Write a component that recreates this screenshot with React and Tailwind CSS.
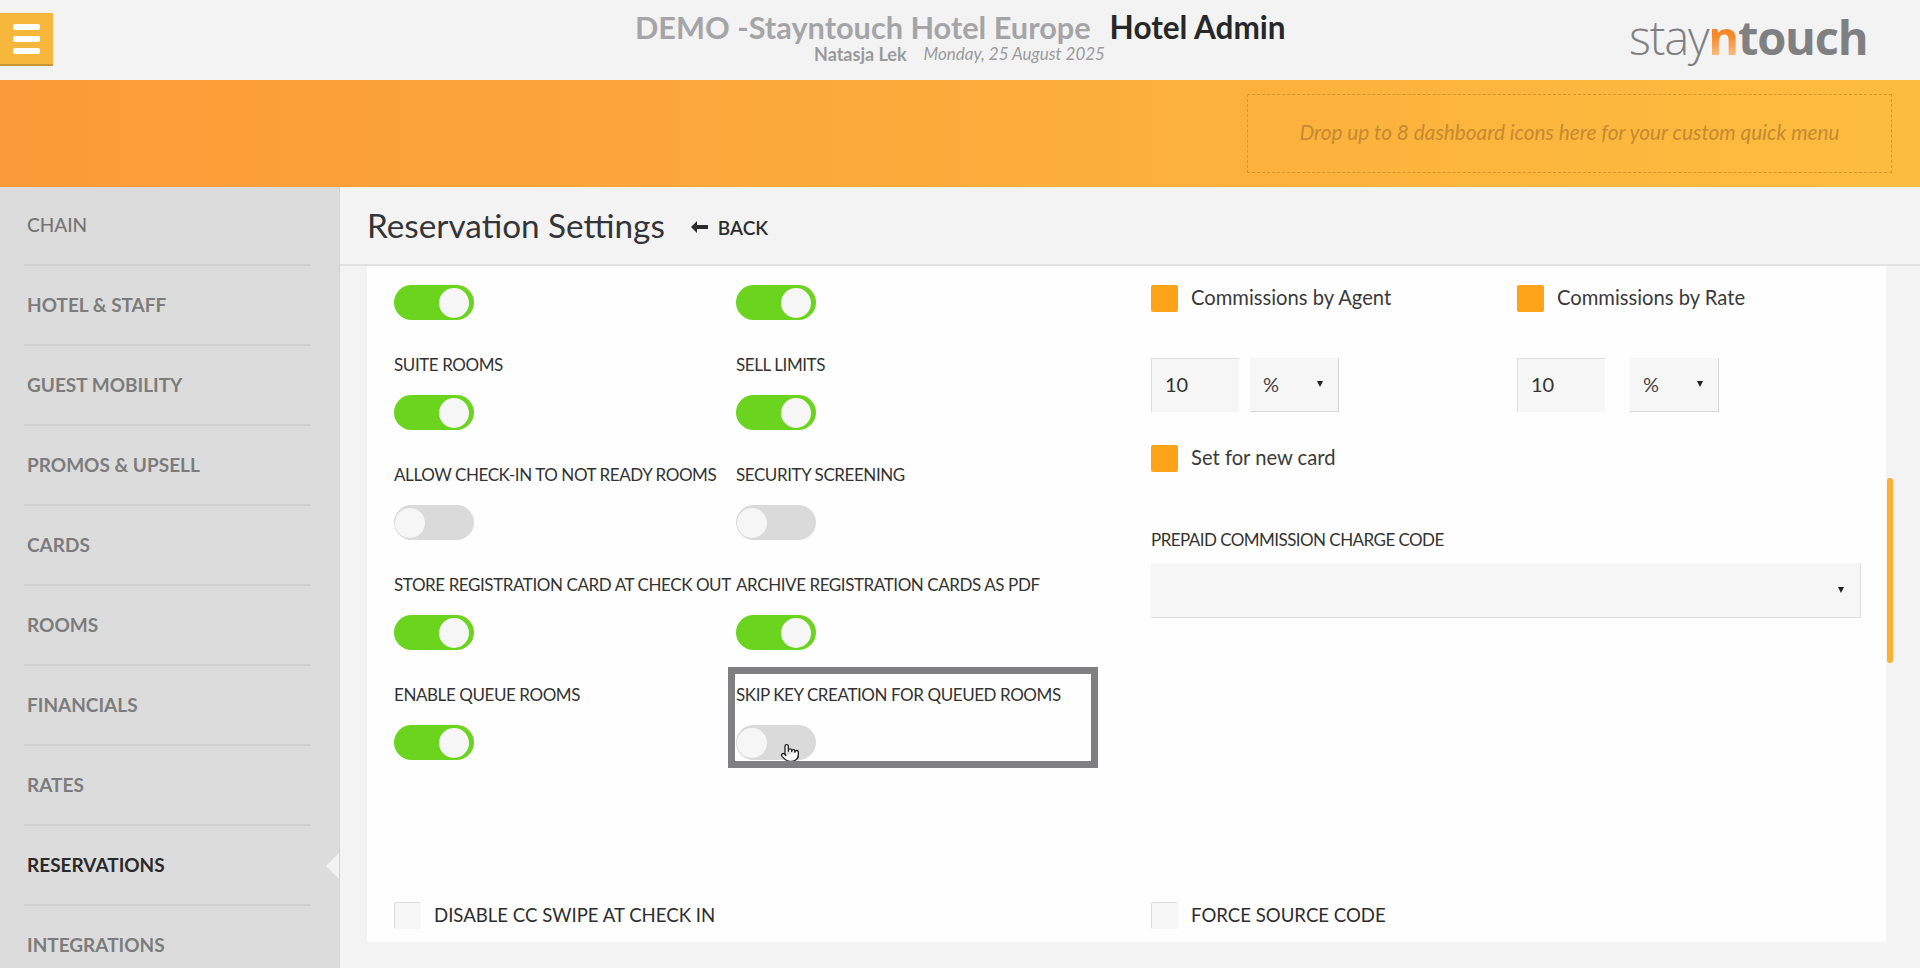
import { Pointer } from 'lucide-react'

const MENU = ['CHAIN', 'HOTEL & STAFF', 'GUEST MOBILITY', 'PROMOS & UPSELL', 'CARDS', 'ROOMS', 'FINANCIALS', 'RATES', 'RESERVATIONS', 'INTEGRATIONS']

const TOGGLES = [
  [{ on: true }, { on: true }],
  [{ label: 'SUITE ROOMS', on: true }, { label: 'SELL LIMITS', on: true }],
  [{ label: 'ALLOW CHECK-IN TO NOT READY ROOMS', on: false }, { label: 'SECURITY SCREENING', on: false }],
  [{ label: 'STORE REGISTRATION CARD AT CHECK OUT', on: true }, { label: 'ARCHIVE REGISTRATION CARDS AS PDF', on: true }],
  [{ label: 'ENABLE QUEUE ROOMS', on: true }, { label: 'SKIP KEY CREATION FOR QUEUED ROOMS', on: false }],
]

function Toggle({ on }) {
  return (
    <div className={`w-[80px] h-[35px] rounded-full flex items-center ${on ? 'bg-[#6bd41f] justify-end pr-[5px]' : 'bg-[#dadada] justify-start pl-[1px]'}`}>
      <div className="w-[30px] h-[30px] rounded-full bg-[#f6f6f6]" />
    </div>
  )
}

function Check({ label, on, upper }) {
  return (
    <div className="flex items-center gap-[13px]">
      <div className={`w-[27px] h-[27px] rounded-[2px] ${on ? 'bg-[#fda31a]' : 'bg-[#f6f6f6] border-l border-t border-[#dcdcdc]'}`} />
      <span className={`whitespace-nowrap ${upper ? 'leading-[27px] text-[18.6px] text-[#2d2d2d]' : 'leading-[24px] pb-[3px] text-[20.2px] text-[#3a3a3a]'}`}>{label}</span>
    </div>
  )
}

function Caret() {
  return <div className="w-0 h-0 border-x-[3.5px] border-x-transparent border-t-[6px] border-t-[#222]" />
}

function Amount({ wide }) {
  return (
    <div className={`flex ${wide ? 'gap-[25px]' : 'gap-[11px]'}`}>
      <div className="w-[88px] h-[54px] bg-[#f6f6f6] border-l border-t border-[#dedede] flex items-center pl-[13px] pb-[4px] text-[20px] text-[#333]">10</div>
      <div className="w-[89px] h-[54px] bg-[#f6f6f6] border-b border-r border-[#d6d6d6] flex items-center justify-between pl-[13px] pr-[15px] pb-[2px] text-[20px] text-[#444]">
        %
        <Caret />
      </div>
    </div>
  )
}

export default function App() {
  return (
    <div className="h-[968px] overflow-hidden flex flex-col bg-[#f3f3f4] font-['Lato',sans-serif]">
      {/* Top bar */}
      <header className="h-[80px] flex-shrink-0 relative">
        <button className="mt-[13px] w-[53px] h-[53px] bg-[#f6b73c] border-b-2 border-[#c8953a] flex flex-col items-center justify-center gap-[6px]">
          <span className="w-[27px] h-[6px] rounded-[2px] bg-white" />
          <span className="w-[27px] h-[6px] rounded-[2px] bg-white" />
          <span className="w-[27px] h-[6px] rounded-[2px] bg-white" />
        </button>
        <div className="absolute left-[635px] top-[8px] flex items-baseline gap-[19px] whitespace-nowrap leading-[38px] font-bold">
          <span className="text-[30.7px] text-[#a5a5a7]">DEMO -Stayntouch Hotel Europe</span>
          <span className="text-[31.5px] text-[#27272a]">Hotel Admin</span>
        </div>
        <div className="absolute left-[814px] top-[44px] flex gap-[17px] whitespace-nowrap leading-[20px] text-[#9a9a9c]">
          <span className="text-[18px] font-bold">Natasja Lek</span>
          <span className="text-[17px] italic">Monday, 25 August 2025</span>
        </div>
        <div className="absolute left-[1629px] top-[6px] text-[47px] leading-[62px] tracking-[-1.2px] whitespace-nowrap font-['Open_Sans',sans-serif] text-[#808083]">
          <span className="font-light">stay</span>
          <span className="font-bold bg-gradient-to-b from-[#f47b16] via-[#f58a2a] to-[#fbdcb0] bg-clip-text text-transparent">n</span>
          <span className="font-bold">touch</span>
        </div>
      </header>

      {/* Orange band */}
      <div className="h-[107px] flex-shrink-0 flex justify-end bg-gradient-to-r from-[#fb9a38] to-[#fcbd3f] pr-[28px] pt-[14px]">
        <div className="w-[645px] h-[79px] border border-dashed border-[#d5962f] flex items-center justify-center pb-[4px] italic text-[20.8px] text-[#c68a30]">
          Drop up to 8 dashboard icons here for your custom quick menu
        </div>
      </div>

      <div className="flex-1 min-h-0 flex">
        {/* Sidebar */}
        <nav className="w-[340px] flex-shrink-0 bg-[#dcdcdc] pl-[24px] pr-[28px] overflow-hidden border-r border-[#d2d2d2]">
          {MENU.map((item, i) => (
            <div key={item} className="relative h-[80px] flex-shrink-0 border-b-2 border-[#cfcfcf] flex items-center pl-[3px] first:pb-[1px] first:h-[79px]">
              <span className={`text-[19px] ${item === 'RESERVATIONS' ? 'font-bold text-[#2a2a2a]' : i === 0 ? 'font-medium text-[#757575]' : 'font-bold text-[#7c7c7c]'}`}>{item}</span>
              {item === 'RESERVATIONS' && (
                <div className="absolute right-[-28px] top-[27px] w-0 h-0 border-y-[13px] border-y-transparent border-r-[13px] border-r-[#f3f3f4]" />
              )}
            </div>
          ))}
        </nav>

        {/* Main */}
        <main className="flex-1 min-w-0 flex flex-col">
          <div className="h-[79px] flex-shrink-0 flex items-center pl-[27px] border-b-2 border-[#e2e2e3]">
            <h1 className="text-[33.3px] text-[#333538] leading-none">Reservation Settings</h1>
            <div className="ml-[26px] mt-[3px] flex items-center gap-[10px] text-[19px] font-semibold text-[#2d2d2d]">
              <svg width="17" height="12" viewBox="0 0 17 12">
                <path d="M6 0 L0 6 L6 12 L6 8 L17 8 L17 4 L6 4 Z" fill="#2d2d2d" />
              </svg>
              <span className="mt-[2px]">BACK</span>
            </div>
          </div>

          <div className="flex-1 min-h-0 flex pl-[27px] pb-[26px]">
            <div className="w-[1519px] bg-[#fefefe] overflow-hidden relative">
              <div className="flex">
                <div className="w-[784px] pt-[19px] pl-[27px]">
                  {TOGGLES.map((row, r) => (
                    <div key={r} className="grid grid-cols-[342px_1fr] text-[17px] tracking-[-0.42px] leading-[24px] text-[#333]">
                      {row.map((t, c) => (
                        <div key={c} className={r < 4 ? 'mb-[33px]' : ''}>
                          {t.label && <div className="mb-[18px] whitespace-nowrap">{t.label}</div>}
                          <Toggle on={t.on} />
                        </div>
                      ))}
                    </div>
                  ))}
                </div>

                <div className="w-[710px] pt-[19px]">
                  <div className="grid grid-cols-[366px_1fr]">
                    <Check label="Commissions by Agent" on />
                    <Check label="Commissions by Rate" on />
                  </div>
                  <div className="grid grid-cols-[366px_1fr] mt-[46px]">
                    <Amount />
                    <Amount wide />
                  </div>
                  <div className="mt-[33px]">
                    <Check label="Set for new card" on />
                  </div>
                  <div className="mt-[56px] text-[17px] tracking-[-0.55px] leading-[24px] text-[#333]">PREPAID COMMISSION CHARGE CODE</div>
                  <div className="mt-[11px] h-[55px] bg-[#f6f6f6] border-b border-r border-[#dcdcdc] flex items-center justify-end pr-[16px]">
                    <Caret />
                  </div>
                </div>
              </div>

              <div className="flex mt-[142px]">
                <div className="w-[784px] pl-[27px]">
                  <Check label="DISABLE CC SWIPE AT CHECK IN" upper />
                </div>
                <Check label="FORCE SOURCE CODE" upper />
              </div>

              {/* cursor sits under the highlight, its tip is cut off by the frame */}
              <Pointer size={20} fill="#fff" strokeWidth={1.6} className="absolute left-[413px] top-[477px] text-[#222]" />
              <div className="absolute left-[361px] top-[401px] w-[370px] h-[101px] border-[7px] border-[#808083]" />
            </div>
            <div className="ml-[1px] mt-[212px] w-[6px] h-[185px] rounded-full bg-[#fbb034]" />
          </div>
        </main>
      </div>
    </div>
  )
}
